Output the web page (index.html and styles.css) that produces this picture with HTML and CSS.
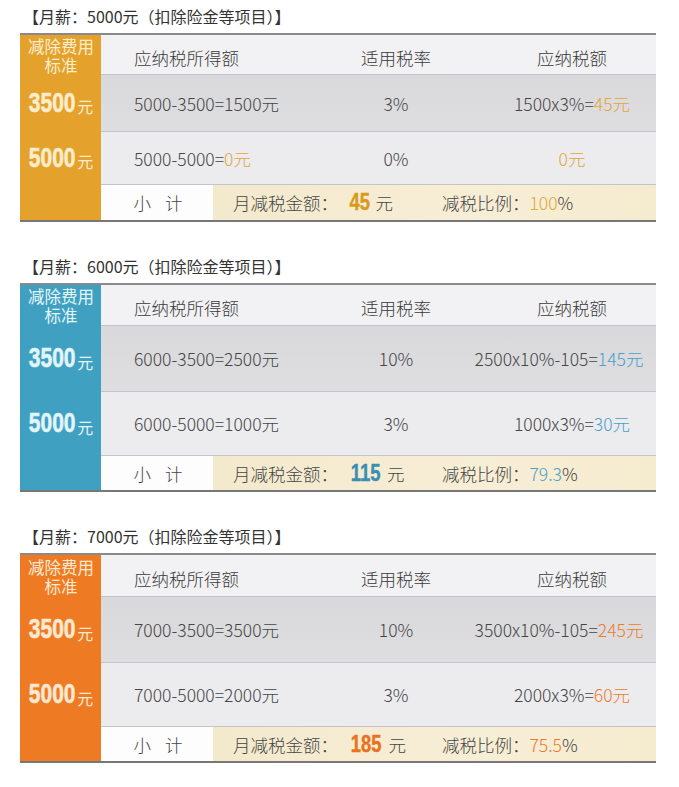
FILE: index.html
```html
<!DOCTYPE html>
<html lang="zh-CN">
<head>
<meta charset="utf-8">
<title>减税对比</title>
<link rel="stylesheet" href="styles.css">
</head>
<body>
<main class="page">
  <section class="block">
    <h2 class="title">【月薪：5000元（扣除险金等项目）】</h2>
    <div class="table t1 gold">
      <div class="side side-head"><span class="side-title">减除费用标准</span></div>
      <div class="cell head c1">应纳税所得额</div>
      <div class="cell head c2">适用税率</div>
      <div class="cell head c3">应纳税额</div>

      <div class="side"><span class="big">3500</span><span class="unit">元</span></div>
      <div class="cell r1 c1">5000-3500=1500元</div>
      <div class="cell r1 c2">3%</div>
      <div class="cell r1 c3">1500x3%=<span class="hl">45元</span></div>

      <div class="side"><span class="big">5000</span><span class="unit">元</span></div>
      <div class="cell r2 c1">5000-5000=<span class="hl">0元</span></div>
      <div class="cell r2 c2">0%</div>
      <div class="cell r2 c3"><span class="hl">0元</span></div>

      <div class="side"></div>
      <div class="sub">
        <div class="sub-label">小 计</div>
        <div class="sub-body">
          <span class="sub-a">月减税金额：<b class="amt">45</b>元</span>
          <span class="sub-b">减税比例：<span class="hl">100</span>%</span>
        </div>
      </div>
    </div>
  </section>

  <section class="block">
    <h2 class="title">【月薪：6000元（扣除险金等项目）】</h2>
    <div class="table t2 blue">
      <div class="side side-head"><span class="side-title">减除费用标准</span></div>
      <div class="cell head c1">应纳税所得额</div>
      <div class="cell head c2">适用税率</div>
      <div class="cell head c3">应纳税额</div>

      <div class="side"><span class="big">3500</span><span class="unit">元</span></div>
      <div class="cell r1 c1">6000-3500=2500元</div>
      <div class="cell r1 c2">10%</div>
      <div class="cell r1 c3 wide">2500x10%-105=<span class="hl">145元</span></div>

      <div class="side"><span class="big">5000</span><span class="unit">元</span></div>
      <div class="cell r2 c1">6000-5000=1000元</div>
      <div class="cell r2 c2">3%</div>
      <div class="cell r2 c3">1000x3%=<span class="hl">30元</span></div>

      <div class="side"></div>
      <div class="sub">
        <div class="sub-label">小 计</div>
        <div class="sub-body">
          <span class="sub-a">月减税金额：<b class="amt">115</b>元</span>
          <span class="sub-b">减税比例：<span class="hl">79.3</span>%</span>
        </div>
      </div>
    </div>
  </section>

  <section class="block">
    <h2 class="title">【月薪：7000元（扣除险金等项目）】</h2>
    <div class="table t3 orange">
      <div class="side side-head"><span class="side-title">减除费用标准</span></div>
      <div class="cell head c1">应纳税所得额</div>
      <div class="cell head c2">适用税率</div>
      <div class="cell head c3">应纳税额</div>

      <div class="side"><span class="big">3500</span><span class="unit">元</span></div>
      <div class="cell r1 c1">7000-3500=3500元</div>
      <div class="cell r1 c2">10%</div>
      <div class="cell r1 c3 wide">3500x10%-105=<span class="hl">245元</span></div>

      <div class="side"><span class="big">5000</span><span class="unit">元</span></div>
      <div class="cell r2 c1">7000-5000=2000元</div>
      <div class="cell r2 c2">3%</div>
      <div class="cell r2 c3">2000x3%=<span class="hl">60元</span></div>

      <div class="side"></div>
      <div class="sub">
        <div class="sub-label">小 计</div>
        <div class="sub-body">
          <span class="sub-a">月减税金额：<b class="amt">185</b>元</span>
          <span class="sub-b">减税比例：<span class="hl">75.5</span>%</span>
        </div>
      </div>
    </div>
  </section>
</main>
</body>
</html>
```

FILE: styles.css
```css
* { box-sizing: border-box; }
html, body { margin: 0; padding: 0; background: #fff; }
body {
  font-family: "Noto Sans CJK SC", "Noto Sans", sans-serif;
  color: #444;
}
.page { padding: 4px 23px 0 20px; width: 679px; }
.block + .block { margin-top: 32px; }
.title {
  margin: 0 0 5px;
  padding-left: 3px;
  font-size: 16px;
  line-height: 24px;
  font-weight: 400;
  color: #333;
}
.table {
  display: grid;
  grid-template-columns: 81px 229px 132px 194px;
  width: 636px;
  border-top: 2px solid #8a8a8a;
  border-bottom: 2px solid #777;
}
.t1 { grid-template-rows: 39px 57px 53px 36px; }
.t2 { grid-template-rows: 40px 66px 64px 35px; }
.t3 { grid-template-rows: 41px 66px 64px 35px; }

.gold { --main: #e4a12c; --side: #fcedcc; --hl: #e2a63a; --amt: #d99a1c; }
.blue { --main: #40a0c1; --side: #e2f5f9; --hl: #4b9fc7; --amt: #3a8db3; }
.orange { --main: #ee7b23; --side: #fde9d3; --hl: #ee7a2b; --amt: #e8721d; }

.side {
  background: var(--main);
  color: var(--side);
  display: flex;
  align-items: center;
  justify-content: center;
  padding-left: 1px;
}
.side-head {
  font-size: 16.5px;
  line-height: 19px;
  padding-top: 2px;
}
.side-title {
  display: block;
  width: 68px;
  text-align: center;
}
.big {
  display: inline-block;
  font-family: "Liberation Sans", "Arial", sans-serif;
  font-weight: 700;
  font-size: 28px;
  line-height: 28px;
  transform: scaleX(0.75);
  margin: 0 -8px;
  -webkit-text-stroke: 0.6px var(--side);
}
.unit { font-size: 16px; margin-left: 2px; padding-top: 7px; }

.cell {
  display: flex;
  align-items: center;
  font-size: 17.5px;
  font-weight: 300;
  color: #454545;
  border-top: 1px solid #c4c4c8;
  white-space: nowrap;
}
.head {
  border-top: 0;
  background: #f2f2f4;
  color: #3a3a3a;
  padding-top: 5px;
}
.r1 { background: linear-gradient(#d9d9dc, #dedee1); }
.r2 { background: #ececef; }
.c1 { padding-left: 33px; }
.c2 { justify-content: center; }
.c3 { justify-content: center; padding-left: 26px; }
.c3.wide { padding-left: 0; }
.hl { color: var(--hl); }

.sub {
  grid-column: 2 / 5;
  display: flex;
  border-top: 1px solid #c4c4c8;
  font-size: 17.5px;
  font-weight: 300;
  color: #454545;
}
.sub-label {
  width: 112px;
  background: #fdfdfd;
  display: flex;
  align-items: center;
  justify-content: center;
  letter-spacing: 5px;
  padding-left: 7px;
}
.sub-body {
  flex: 1;
  display: flex;
  align-items: baseline;
  padding-left: 20px;
  padding-top: 4px;
  background: linear-gradient(90deg, #f3e9cd, #f7eed6 60%, #f5ebcf);
}
.sub-a { width: 209px; }
.amt {
  display: inline-block;
  font-family: "Liberation Sans", "Arial", sans-serif;
  font-weight: 700;
  font-size: 23px;
  transform: scaleX(0.8);
  color: var(--amt);
  margin: 0 3px 0 9px;
  -webkit-text-stroke: 0.4px var(--amt);
}
```
